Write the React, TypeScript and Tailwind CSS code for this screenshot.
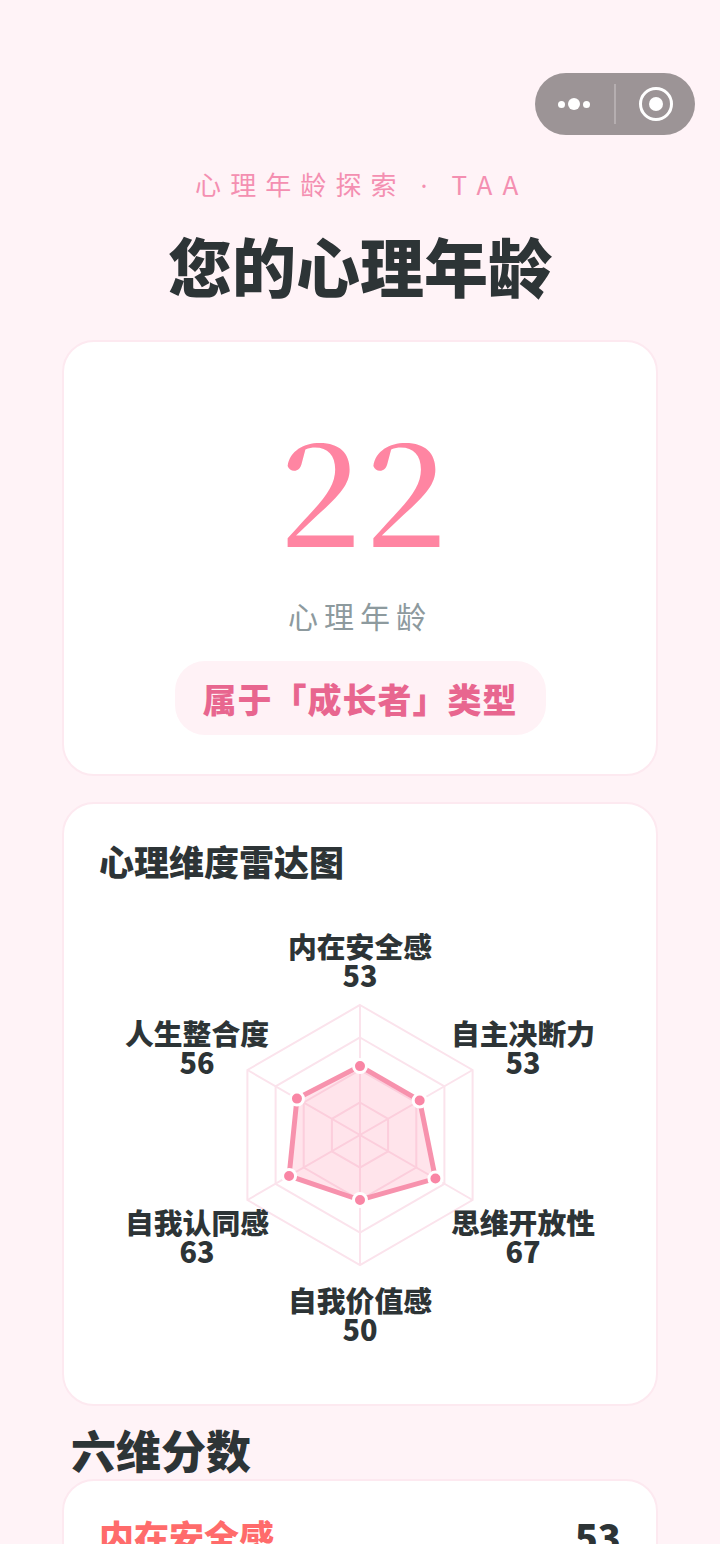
const cjk = '"Noto Sans CJK SC", "Noto Sans", sans-serif';

const values = [53, 53, 67, 50, 63, 56];
const R = 130;
const pt = (i: number, r: number) => {
  const a = (-90 + i * 60) * (Math.PI / 180);
  return [360 + r * Math.cos(a), 1135 + r * Math.sin(a)];
};
const ring = (r: number) => [0, 1, 2, 3, 4, 5].map((i) => pt(i, r).map((n) => n.toFixed(1)).join(",")).join(" ");
const dataPts = values.map((v, i) => pt(i, (R * v) / 100));
const labels = [
  { n: "内在安全感", v: "53", x: 360, y: 958 },
  { n: "自主决断力", v: "53", x: 523, y: 1045 },
  { n: "思维开放性", v: "67", x: 523, y: 1234 },
  { n: "自我价值感", v: "50", x: 360, y: 1312 },
  { n: "自我认同感", v: "63", x: 197, y: 1234 },
  { n: "人生整合度", v: "56", x: 197, y: 1045 },
];

function Radar() {
  return (
    <svg width={592} height={514} viewBox="64 885 592 514" className="block">
      {[R, R * 0.75, R * 0.5, R * 0.25].map((r) => (
        <polygon key={r} points={ring(r)} fill="none" stroke="#fbe3ec" strokeWidth={2} />
      ))}
      {[0, 1, 2].map((i) => {
        const a = pt(i, R);
        const b = pt(i + 3, R);
        return <line key={i} x1={a[0]} y1={a[1]} x2={b[0]} y2={b[1]} stroke="#fbe3ec" strokeWidth={2} />;
      })}
      <polygon
        points={dataPts.map((p) => p.join(",")).join(" ")}
        fill="#ff85a2"
        fillOpacity={0.22}
        stroke="#f792ad"
        strokeWidth={5}
      />
      {dataPts.map((p, i) => (
        <circle key={i} cx={p[0]} cy={p[1]} r={6.5} fill="#f986a5" stroke="#ffffff" strokeWidth={3} />
      ))}
      {labels.map((l) => (
        <text key={l.n} textAnchor="middle" fontWeight={900} fontSize={28.8} fill="#2d3436" style={{ fontFamily: cjk }}>
          <tspan x={l.x} y={l.y}>{l.n}</tspan>
          <tspan x={l.x} y={l.y + 29}>{l.v}</tspan>
        </text>
      ))}
    </svg>
  );
}

export default function App() {
  return (
    <div
      className="relative h-[1544px] w-[720px] overflow-hidden bg-[#fff3f7] text-[#2d3436]"
      style={{ fontFamily: cjk }}
    >
      <div className="absolute left-[535px] top-[73px] flex h-[62px] w-[160px] items-center rounded-full bg-[#9c9496]">
        <div className="flex w-[79px] items-center justify-center gap-[3px] pr-[2px]">
          <span className="h-[7px] w-[7px] rounded-full bg-white" />
          <span className="h-[12px] w-[12px] rounded-full bg-white" />
          <span className="h-[7px] w-[7px] rounded-full bg-white" />
        </div>
        <div className="h-[40px] w-[2px] bg-[#b5aeb0]" />
        <div className="flex flex-1 items-center justify-center">
          <div className="flex h-[34px] w-[34px] items-center justify-center rounded-full border-[3px] border-white">
            <div className="h-[14px] w-[14px] rounded-full bg-white" />
          </div>
        </div>
      </div>

      <div className="flex flex-col px-[62px] pt-[165px]">
        <p className="pl-[4px] text-center text-[26px] font-normal leading-[38px] tracking-[9.1px] text-[#f48fb1]">
          心理年龄探索 <span style={{ fontFamily: '"Noto Sans", sans-serif' }}>·</span>{" "}
          <span className="tracking-[10.5px]">TAA</span>
        </p>
        <h1 className="mt-[15px] text-center text-[64px] font-black leading-[90px] text-[#2d3436]">您的心理年龄</h1>

        <section className="mt-[31px] flex h-[436px] flex-col items-center rounded-[32px] border-2 border-[#fde9f0] bg-white">
          <div
            className="mt-[58px] h-[170px] pl-[11px] text-[144px] font-medium leading-[170px] tracking-[5px] text-[#ff85a2]"
            style={{ fontFamily: '"Noto Serif CJK SC", "Liberation Serif", serif' }}
          >
            22
          </div>
          <p className="mt-[23px] text-[30px] font-normal leading-[44px] tracking-[6px] text-[#8d9a9e]">心理年龄</p>
          <div className="mt-[24px] flex h-[74px] items-center rounded-[30px] bg-[#fff2f6] px-[28px] text-[34px] font-black tracking-[1px] text-[#e8668f]">
            属于「成长者」类型
          </div>
        </section>

        <section className="mt-[26px] h-[604px] rounded-[32px] border-2 border-[#fde9f0] bg-white">
          <h2 className="ml-[35px] mt-[33px] text-[35px] font-black leading-[48px]">心理维度雷达图</h2>
          <Radar />
        </section>

        <h2 className="ml-[9px] mt-[15px] text-[45px] font-black leading-[58px]">六维分数</h2>

        <section className="h-[200px] rounded-[32px] border-2 border-[#fde9f0] bg-white px-[35px] pt-[33px]">
          <div className="flex items-center justify-between">
            <span className="text-[35px] font-black leading-[44px] text-[#ff6b6b]">内在安全感</span>
            <span className="text-[38px] font-black leading-[44px]">53</span>
          </div>
        </section>
      </div>
    </div>
  );
}
